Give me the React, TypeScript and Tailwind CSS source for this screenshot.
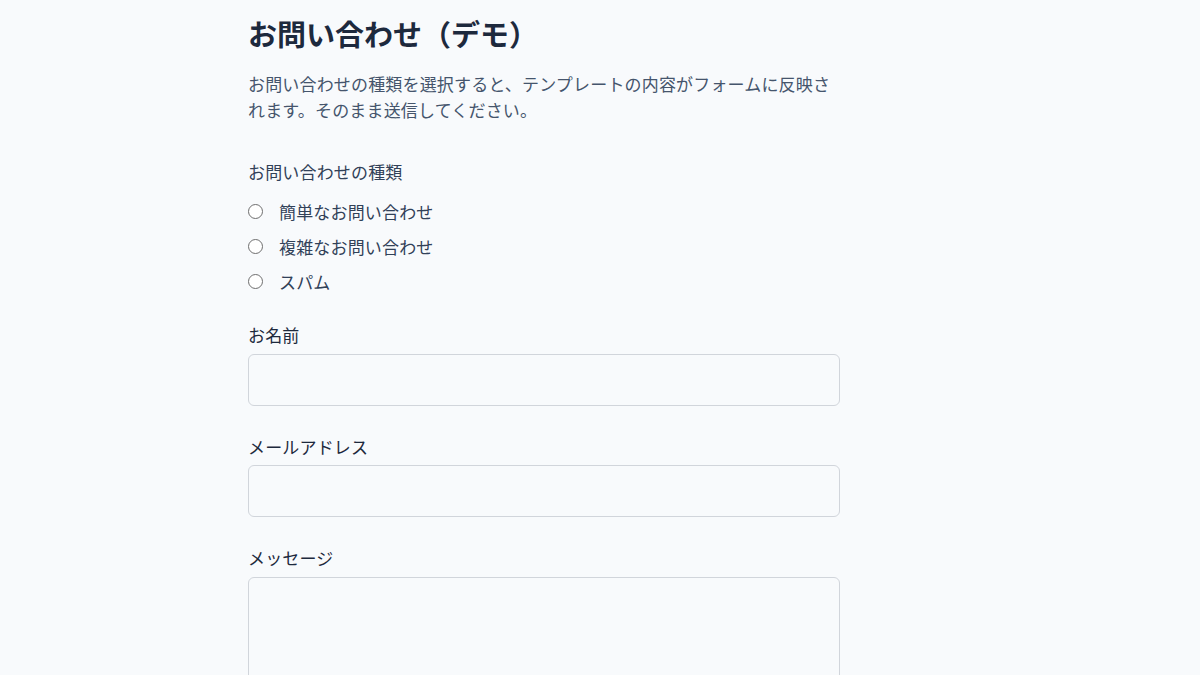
import React from "react";

const font = { fontFamily: '"Noto Sans CJK JP", "Noto Sans", sans-serif' };

function Radio({ label }: { label: string }) {
  return (
    <label className="flex items-center h-[25.5px]">
      <span className="w-[15px] h-[15px] rounded-full border-[1.25px] border-[#6e6e6e] bg-white shrink-0" />
      <span className="ml-[16px] text-[17px] leading-[25.5px] tracking-[0.01em] text-slate-700">{label}</span>
    </label>
  );
}

function Field({ label, tall }: { label: string; tall?: boolean }) {
  return (
    <div className="flex flex-col">
      <label className="text-[17px] leading-[25.5px] tracking-[0.01em] text-slate-800">{label}</label>
      {tall ? (
        <textarea className="mt-[6px] w-full h-[180px] rounded-md border border-[#d1d5db] bg-transparent resize-none" />
      ) : (
        <input type="text" className="mt-[6px] w-full h-[52px] rounded-md border border-[#d1d5db] bg-transparent" />
      )}
    </div>
  );
}

export default function App() {
  return (
    <div className="min-h-screen bg-[#f8fafc] pl-[248px] pt-[15px]" style={font}>
      <div className="w-[592px]">
        <h1 className="text-[29px] leading-[36px] font-bold text-slate-800">お問い合わせ（デモ）</h1>
        <p className="mt-[20px] text-[17px] leading-[25.5px] tracking-[0.01em] text-slate-600">
          お問い合わせの種類を選択すると、テンプレートの内容がフォームに反映されます。そのまま送信してください。
        </p>
        <form className="mt-[37px] flex flex-col gap-[28px]">
          <div className="flex flex-col">
            <div className="text-[17px] leading-[25.5px] tracking-[0.01em] text-slate-700">お問い合わせの種類</div>
            <div className="mt-[14px] flex flex-col gap-[9.5px]">
              <Radio label="簡単なお問い合わせ" />
              <Radio label="複雑なお問い合わせ" />
              <Radio label="スパム" />
            </div>
          </div>
          <Field label="お名前" />
          <Field label="メールアドレス" />
          <Field label="メッセージ" tall />
        </form>
      </div>
    </div>
  );
}
